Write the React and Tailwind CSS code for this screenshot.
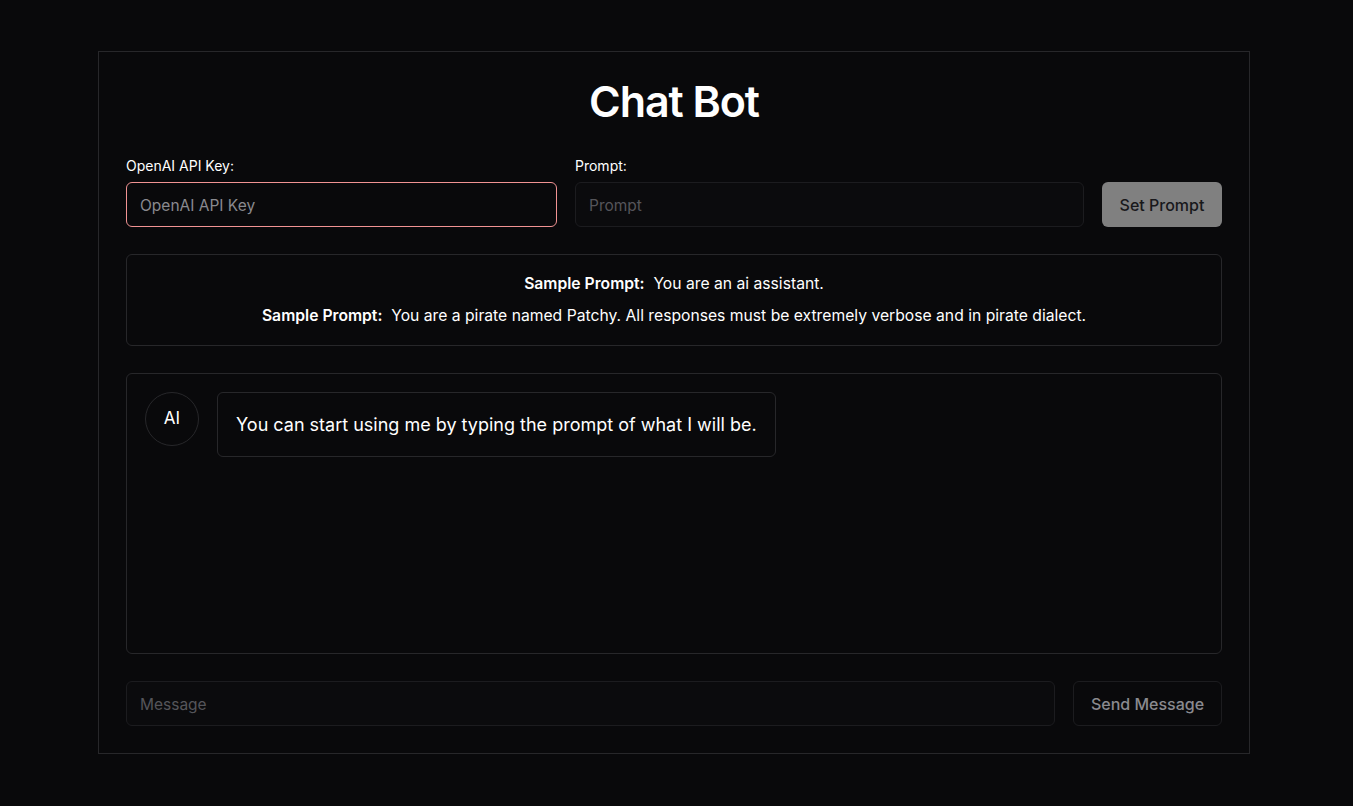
import React, { useState } from "react";

const SAMPLES = [
  "You are an ai assistant.",
  "You are a pirate named Patchy. All responses must be extremely verbose and in pirate dialect.",
];

const App = () => {
  const [apiKey, setApiKey] = useState("");
  const [prompt, setPrompt] = useState("");
  const [message, setMessage] = useState("");

  return (
    <div
      className="min-h-screen bg-[#09090b] text-white pt-[51px]"
      style={{ fontFamily: "Inter, 'Noto Sans', sans-serif" }}
    >
      <div className="ml-[98px] w-[1152px] h-[703px] border border-[#27272a] px-[27px] pt-[25px] pb-[27px] flex flex-col">
        {/* TITLE */}
        <h1 className="text-center text-[43px] leading-[48px] font-semibold tracking-tight">Chat Bot</h1>

        {/* KEY + PROMPT */}
        <div className="flex items-end gap-[18px] mt-[32px]">
          <div className="flex flex-col w-[431px]">
            <label className="text-[14px] leading-[18px] font-normal mb-[7px]">OpenAI API Key:</label>
            <input
              value={apiKey}
              onChange={(e) => setApiKey(e.target.value)}
              placeholder="OpenAI API Key"
              className="h-[45px] rounded-md border border-[#f19393] bg-transparent px-[13px] pt-[2px] text-[15.5px] outline-none placeholder:text-[#8a8a8f]"
            />
          </div>
          <div className="flex flex-col flex-1">
            <label className="text-[14px] leading-[18px] font-normal mb-[7px]">Prompt:</label>
            <input
              value={prompt}
              onChange={(e) => setPrompt(e.target.value)}
              placeholder="Prompt"
              className="h-[45px] rounded-md border border-[#1c1c1f] bg-[#0b0b0d] px-[13px] pt-[2px] text-[15.5px] outline-none placeholder:text-[#55555a]"
            />
          </div>
          <button className="h-[45px] w-[120px] rounded-md bg-[#808080] text-[#18181b] text-[16px] font-medium">
            Set Prompt
          </button>
        </div>

        {/* SAMPLES */}
        <div className="mt-[27px] h-[92px] rounded-md border border-[#27272a] flex flex-col items-center justify-center gap-[8px] text-[15.7px] leading-[24px]">
          {SAMPLES.map((s, i) => (
            <p key={i}>
              <span className="font-semibold">Sample Prompt:</span>&nbsp; {s}
            </p>
          ))}
        </div>

        {/* CHAT */}
        <div className="mt-[27px] h-[281px] rounded-md border border-[#27272a] px-[18px] py-[18px]">
          <div className="flex items-start gap-[18px]">
            <div className="w-[54px] h-[54px] rounded-full border border-[#27272a] flex items-center justify-center text-[17px]">
              AI
            </div>
            <div className="h-[65px] rounded-md border border-[#27272a] px-[18px] flex items-center text-[18px]">
              You can start using me by typing the prompt of what I will be.
            </div>
          </div>
        </div>

        {/* MESSAGE */}
        <div className="mt-[27px] flex gap-[18px]">
          <input
            value={message}
            onChange={(e) => setMessage(e.target.value)}
            placeholder="Message"
            className="flex-1 h-[45px] rounded-md border border-[#1c1c1f] bg-[#0b0b0d] px-[13px] pt-[2px] text-[15.5px] outline-none placeholder:text-[#55555a]"
          />
          <button className="h-[45px] w-[149px] rounded-md border border-[#1c1c1f] text-[#8a8a8f] text-[16px] font-medium">
            Send Message
          </button>
        </div>
      </div>
    </div>
  );
};

export default App;
